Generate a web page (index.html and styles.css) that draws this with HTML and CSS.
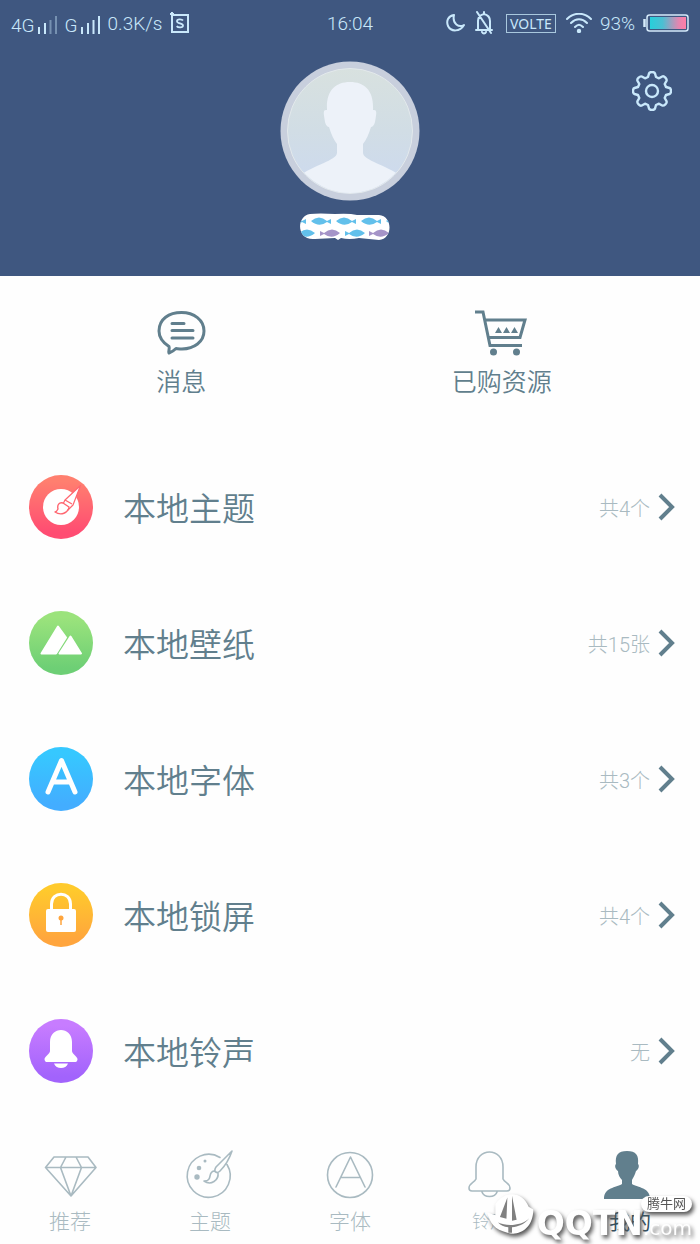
FILE: index.html
```html
<!DOCTYPE html>
<html lang="zh-CN">
<head>
<meta charset="utf-8">
<meta name="viewport" content="width=device-width, initial-scale=1">
<title>我的</title>
<link rel="stylesheet" href="styles.css">
</head>
<body>
<header class="hero">
  <div class="status">
    <div class="status-side">
      <span class="net">4G<svg width="20" height="20" viewBox="0 0 20 20"><path class="bar" d="M2 19v-7M8 19v-11"/><path class="bar faint" d="M13.500 19V5M19 19V1"/></svg></span>
      <span class="net">G<svg width="20" height="20" viewBox="0 0 20 20"><path class="bar" d="M2 19v-7M8 19v-11M13.500 19V5M19 19V1"/></svg></span>
      <span class="rate">0.3K/s</span>
      <svg width="20" height="22" viewBox="0 0 20 22"><path d="M2 3h16v17H2zM2 0v4M0 2h4" fill="none" stroke="#c9e8fb" stroke-width="2"/><path d="M13 8.500c-1-1.500-6-1.800-6 .7 0 2.700 6 1.500 6 4.300 0 2.500-5 2.300-6.300.6" fill="none" stroke="#c9e8fb" stroke-width="1.800"/></svg>
    </div>
    <time class="clock">16:04</time>
    <div class="status-side status-end">
      <svg width="20" height="20" viewBox="0 0 20 20" class="line"><path d="M8 2C2 3 0 8 2 13c3 6 12 6 16-1-5 3-12-1-10-10z"/></svg>
      <svg width="20" height="24" viewBox="0 0 20 24" class="line"><path d="M2 19h16M4 18V10c0-4 2-6 6-7 4 1 6 3 6 7v9M3 1l14 21M8 21c1 2 3 2 4 0M10 3V1"/></svg>
      <span class="volte">VOLTE</span>
      <svg width="26" height="20" viewBox="0 0 26 20" class="line"><path d="M1 6C8-1 18-1 25 6M5 10c5-5 11-5 16 0M9 14c3-3 5-3 8 0"/><circle cx="13" cy="18" r="1.200" fill="#c9e8fb"/></svg>
      <span class="charge">93%</span>
      <svg width="46" height="18" viewBox="0 0 46 18"><defs><linearGradient id="bat"><stop offset="0" stop-color="#27cfdb"/><stop offset=".35" stop-color="#4cbfd2"/><stop offset=".8" stop-color="#e585b0"/><stop offset="1" stop-color="#ff7ea7"/></linearGradient></defs><rect x="4" y="1" width="41" height="16" rx="2.500" fill="none" stroke="#d5eafa" stroke-width="1.500"/><path d="M1.500 5v8" stroke="#d5eafa" stroke-width="2.500"/><rect x="7" y="3" width="36" height="12" fill="url(#bat)"/></svg>
    </div>
  </div>
  <button class="settings" type="button" aria-label="设置"><svg width="40" height="40" viewBox="-20 -20 40 40" fill="none" stroke="#c9e8fb" stroke-width="2.400" stroke-linejoin="round"><path d="M-4-14L-3-17.500Q-2.500-19 0-19T3-17.500L4-14L7-12.700L10.200-14.500Q11.700-15.200 13.400-13.400T14.500-10.200L12.700-7L14-4L17.500-3Q19-2.500 19 0T17.500 3L14 4L12.700 7L14.500 10.200Q15.200 11.700 13.400 13.400T10.200 14.500L7 12.700L4 14L3 17.500Q2.500 19 0 19T-3 17.500L-4 14L-7 12.700L-10.200 14.500Q-11.700 15.200-13.400 13.400T-14.500 10.200L-12.700 7L-14 4L-17.500 3Q-19 2.500-19 0T-17.500-3L-14-4L-12.700-7L-14.500-10.200Q-15.200-11.700-13.400-13.400T-10.200-14.500L-7-12.700Z"/><circle r="6"/></svg></button>
  <div class="profile">
    <svg width="140" height="140" viewBox="0 0 140 140" role="img" aria-label="头像"><defs><linearGradient id="sky" x2="0" y2="1"><stop offset="0" stop-color="#d8e1df"/><stop offset=".5" stop-color="#d1dde5"/><stop offset="1" stop-color="#ccd9f0"/></linearGradient><clipPath id="disc"><circle cx="70" cy="70" r="62"/></clipPath></defs><circle cx="70" cy="70" r="69.500" fill="#c8cfdd"/><circle cx="70" cy="70" r="62.500" fill="url(#sky)" stroke="#e3e9ec"/><path clip-path="url(#disc)" fill="#edf2f9" d="M47 49C46 30 55 21 70 21s24 9 23 28c5-1 3 5 2 12-1 4-3 5-4 5-2 7-5 13-8 17v9c1 7 15 9 37 22v30H20v-30c22-13 36-15 37-22v-9c-3-4-6-10-8-17-1 0-3-1-4-5-1-7-3-13 2-12z"/></svg>
    <svg class="nickname" width="92" height="28" viewBox="0 0 92 28" role="img" aria-label="昵称"><defs><clipPath id="pill"><path d="M11 1Q20 0 36 1Q50 0 58 2L80 2C94 3 94 26 80 27L70 26L60 25Q50 27 42 25L39 27L36 25L16 26C-3 28-3 3 11 1z"/></clipPath><path id="fish" d="M-8 0Q0-7 8 0L12-2V3L8 1Q0 7-8 0z"/></defs><g clip-path="url(#pill)"><path fill="#fff" d="M0 0h92v28H0z"/><g fill="#62c0eb"><use href="#fish" x="-5" y="8"/><use href="#fish" x="20" y="8"/><use href="#fish" x="45" y="8"/><use href="#fish" x="70" y="8"/><use href="#fish" x="95" y="8"/><use href="#fish" transform="translate(8 20)scale(-1 1)"/><use href="#fish" transform="translate(58 20)scale(-1 1)"/></g><g fill="#a594c8"><use href="#fish" transform="translate(33 20)scale(-1 1)"/><use href="#fish" transform="translate(82 20)scale(-1 1)"/></g></g></svg>
  </div>
</header>

<main>
  <div class="shortcuts">
    <a href="#messages"><svg width="54" height="48" viewBox="0 0 54 48" fill="none" stroke="#617f8d" stroke-width="3" stroke-linecap="round" stroke-linejoin="round"><path d="M15 38.500C8 34 5 29 5 23 5 11 15 4.500 27.500 4.500S50 12 50 23 40 40.500 28 41c-3 0-5-.5-6-.5-2 2-4 3.500-7 4.500-1-2 1-4 0-6.500zM18 15.500h12M18 22.500h21M18 30h21"/></svg><span>消息</span></a>
    <a href="#purchased"><svg width="54" height="48" viewBox="0 0 54 48"><g fill="none" stroke="#617f8d" stroke-width="3"><path d="M0 4h8L15 37.500h32M10.500 12H50l-5 17.500H14"/></g><path fill="#617f8d" d="M20 25l3.500-6 3.500 6zM28 25l3.500-6 3.500 6zM36 25l3.500-6 3.500 6z"/><circle cx="18.500" cy="44" r="3.500" fill="#617f8d"/><circle cx="41.500" cy="44" r="3.500" fill="#617f8d"/></svg><span>已购资源</span></a>
  </div>

  <ul class="list">
    <li><a class="row" href="#themes">
      <svg width="66" height="66" viewBox="0 0 66 66"><defs><linearGradient id="red" x2="0" y2="1"><stop offset=".1" stop-color="#ff7f6f"/><stop offset=".9" stop-color="#ff4c72"/></linearGradient></defs><circle cx="33" cy="33" r="32" fill="url(#red)"/><circle cx="33" cy="33" r="18" fill="#fff"/><path d="M52.500 11.500L37 26l-3 6 6 4 5-5z" fill="#fff" stroke="#ff6670" stroke-width="1.200" stroke-linejoin="round"/><path d="M35 29c-4-1-6 2-5 6-1 2-2 3-3 3 6 4 13 1 14-5zM37 26l7 4" fill="#fff" stroke="#ff6670" stroke-width="1.400" stroke-linejoin="round"/></svg>
      <span class="name">本地主题</span><span class="count">共4个</span><svg class="chevron" width="18" height="30" viewBox="0 0 18 30"><path d="M2 3l12 12L2 27"/></svg></a></li>
    <li><a class="row" href="#wallpapers">
      <svg width="66" height="66" viewBox="0 0 66 66"><defs><linearGradient id="green" x2="0" y2="1"><stop offset=".1" stop-color="#9be37c"/><stop offset=".9" stop-color="#6dcf75"/></linearGradient></defs><circle cx="33" cy="33" r="32" fill="url(#green)"/><g fill="#fff" stroke="#fff" stroke-width="2" stroke-linejoin="round"><path d="M13.500 43.500L30 16.500l8 11-10 16zM31.500 43.500l11-17L53 43.500z"/></g></svg>
      <span class="name">本地壁纸</span><span class="count">共15张</span><svg class="chevron" width="18" height="30" viewBox="0 0 18 30"><path d="M2 3l12 12L2 27"/></svg></a></li>
    <li><a class="row" href="#fonts">
      <svg width="66" height="66" viewBox="0 0 66 66"><defs><linearGradient id="blue" x2="0" y2="1"><stop offset=".1" stop-color="#36c8ff"/><stop offset=".9" stop-color="#43adff"/></linearGradient></defs><circle cx="33" cy="33" r="32" fill="url(#blue)"/><path d="M20 46L33.500 14.500 47 46M25 36h17" fill="none" stroke="#fff" stroke-width="5" stroke-linecap="round" stroke-linejoin="round"/></svg>
      <span class="name">本地字体</span><span class="count">共3个</span><svg class="chevron" width="18" height="30" viewBox="0 0 18 30"><path d="M2 3l12 12L2 27"/></svg></a></li>
    <li><a class="row" href="#lockscreens">
      <svg width="66" height="66" viewBox="0 0 66 66"><defs><linearGradient id="gold" x2="0" y2="1"><stop offset=".1" stop-color="#ffca2c"/><stop offset=".9" stop-color="#ffa53d"/></linearGradient></defs><circle cx="33" cy="33" r="32" fill="url(#gold)"/><rect x="18" y="27" width="30" height="23" rx="2" fill="#fff"/><path d="M23.500 28v-6c0-13 19-13 19 0v6" fill="none" stroke="#fff" stroke-width="3"/><circle cx="33" cy="36" r="2.500" fill="#ffa53d"/><path d="M33 37v6" stroke="#ffa53d" stroke-width="1.500"/></svg>
      <span class="name">本地锁屏</span><span class="count">共4个</span><svg class="chevron" width="18" height="30" viewBox="0 0 18 30"><path d="M2 3l12 12L2 27"/></svg></a></li>
    <li><a class="row" href="#ringtones">
      <svg width="66" height="66" viewBox="0 0 66 66"><defs><linearGradient id="violet" x2="0" y2="1"><stop offset=".1" stop-color="#c77cff"/><stop offset=".9" stop-color="#a263fc"/></linearGradient></defs><circle cx="33" cy="33" r="32" fill="url(#violet)"/><path fill="#fff" d="M22 24c0-16 22-16 22 0v9c0 3 5 5 5.500 8 0 2-1 3-2 3h-29c-1 0-2-1-2-3 .5-3 5.500-5 5.500-8zM26 45.500h14c-2 6-12 6-14 0z"/></svg>
      <span class="name">本地铃声</span><span class="count">无</span><svg class="chevron" width="18" height="30" viewBox="0 0 18 30"><path d="M2 3l12 12L2 27"/></svg></a></li>
  </ul>
</main>

<footer class="footer">
  <nav class="tabs">
    <a href="#recommend"><svg width="54" height="52" viewBox="0 0 54 52"><path d="M11 7h34l8 10.500L28 46 2.500 17.500zM2.500 17.500H53M23 7l-5.500 10.500L28 46l10.500-28.500L33 7"/></svg>推荐</a>
    <a href="#theme"><svg width="54" height="52" viewBox="0 0 54 52"><path d="M37 7.500A21.500 21.500 0 1 0 44 14.500M49 1L33 17c-3 5 1 7 4 4C44 14 47 7 49 1zM31 21c-5 1-3 5-5 8-1 2-3 2-5 2 7 5 15-1 14-8z"/><g fill="#a9bac1" stroke="none"><circle cx="22" cy="11" r="1.500"/><circle cx="16" cy="18" r="2.300"/><circle cx="14" cy="27" r="2.700"/></g></svg>主题</a>
    <a href="#font"><svg width="54" height="52" viewBox="0 0 54 52"><circle cx="27" cy="25" r="22.500"/><path d="M13 37L27.500 7 42 37M18 27.500h19"/></svg>字体</a>
    <a href="#ring"><svg width="54" height="52" viewBox="0 0 54 52"><path d="M13 17c0-20 27-20 27 0v12c2 4 7 4 7 9 0 2-1 3-3 3H9c-2 0-3-1-3-3 0-5 5-5 7-9zM19 42c2 6 13 6 15 0"/></svg><span class="small">铃声</span></a>
    <a class="active" href="#mine" aria-current="page"><svg width="54" height="52" viewBox="0 0 54 52"><path fill="#617f8d" stroke="none" d="M16 14C15 5 18 1 27 1s12 4 11 13c2 2 0 6-2 7-1 4-3 7-4 9v4c6 4 18 3 18 15H4c0-12 12-11 18-15v-4c-2-2-4-5-4-9-2-1-4-5-2-7z"/></svg>我的</a>
  </nav>
  <div class="watermark">
    <svg width="50" height="54" viewBox="0 0 54 56"><path fill="#fff" d="M9 14C20-2 39 1 45 17l5 3c0 21-16 29-28 25C8 42 3 34 0 23l9 3z"/><path fill="#555" d="M22 7l-8 21 7 2zM27 5l5 26-5 1zM12 34c9 4 25 4 34-5-7 8-12 9-19 10v6h-4v-6c-5 0-8-2-11-5z" opacity=".75"/></svg>
    <span class="brand">QQTN</span><span class="domain">.com</span>
    <span class="tag">腾牛网</span>
  </div>
</footer>
</body>
</html>
```
FILE: styles.css
```css
* { box-sizing: border-box; }

body {
  margin: 0;
  min-height: 100vh;
  display: flex;
  flex-direction: column;
  background: #fefefe;
  color: #617f8d;
  font-family: Roboto, "Noto Sans CJK SC", sans-serif;
  font-weight: 300;
}

svg { display: block; flex: none; }
a { color: inherit; text-decoration: none; }

.hero {
  position: relative;
  min-height: 276px;
  background: #3f5780;
  color: #c9e8fb;
}

.status {
  display: grid;
  grid-template-columns: 1fr auto 1fr;
  align-items: center;
  height: 46px;
  padding: 0 11px;
  font-size: 19px;
}
.status-side { display: flex; align-items: center; gap: 8px; }
.status-end { justify-content: flex-end; }
.net { display: flex; align-items: center; gap: 2px; padding-top: 4px; }
.bar { stroke: #c9e8fb; stroke-width: 2; }
.faint { opacity: .4; }
.line {
  fill: none;
  stroke: #c9e8fb;
  stroke-width: 2;
  stroke-linecap: round;
  stroke-linejoin: round;
}
.volte {
  padding: 0 3px;
  margin: 0 2px 0 4px;
  border: 1px solid #a9c8de;
  font-family: "Noto Sans", sans-serif;
  font-size: 14px;
  font-weight: 400;
  line-height: 17px;
}

.settings {
  position: absolute;
  top: 71px;
  right: 28px;
  padding: 0;
  border: 0;
  background: none;
  cursor: pointer;
}

.profile {
  display: flex;
  flex-direction: column;
  align-items: center;
  gap: 12px;
  padding-top: 15px;
}
.nickname { margin-right: 10px; }

.shortcuts {
  display: grid;
  grid-template-columns: 1fr 1fr;
  padding: 32px 38px 38px 21px;
}
.shortcuts a {
  display: flex;
  flex-direction: column;
  align-items: center;
  gap: 9px;
  font-size: 25px;
  font-weight: 350;
  line-height: 36px;
}

.list { margin: 0; padding: 0; list-style: none; }
.row {
  display: flex;
  align-items: center;
  min-height: 136px;
  padding: 0 24px 0 28px;
}
.name {
  flex: 1;
  margin-left: 29px;
  padding-top: 5px;
  font-size: 33px;
  font-weight: 350;
  line-height: 48px;
}
.count { color: #a9bac1; font-size: 20px; }
.chevron { margin-left: 8px; }
.chevron path { fill: none; stroke: #617f8d; stroke-width: 4; }

.footer { position: relative; margin-top: auto; }
.tabs {
  display: grid;
  grid-template-columns: repeat(5, 1fr);
  padding-bottom: 8px;
}
.tabs a {
  display: flex;
  flex-direction: column;
  align-items: center;
  gap: 6px;
  color: #a9bac1;
  font-size: 21px;
  line-height: 28px;
}
.tabs svg {
  fill: none;
  stroke: #a9bac1;
  stroke-width: 1.6px;
  stroke-linejoin: round;
  stroke-linecap: round;
}
.tabs .small { font-size: 18px; }
.tabs .active { color: #35505e; font-weight: 400; }
.tabs .active svg { margin-right: 6px; }

.watermark {
  position: absolute;
  right: 8px;
  bottom: 0;
  display: flex;
  align-items: flex-end;
  color: #fff;
  filter: drop-shadow(2px 3px 2px #555);
  pointer-events: none;
}
.brand {
  font: 700 33px/40px "DejaVu Sans", sans-serif;
}
.domain {
  font: 400 20px/32px "DejaVu Sans", sans-serif;
}
.tag {
  position: absolute;
  right: 0;
  top: 6px;
  padding: 0 6px;
  border-radius: 8px;
  background: #fff;
  color: #555;
  font-size: 13px;
  font-weight: 400;
  line-height: 16px;
}
```
